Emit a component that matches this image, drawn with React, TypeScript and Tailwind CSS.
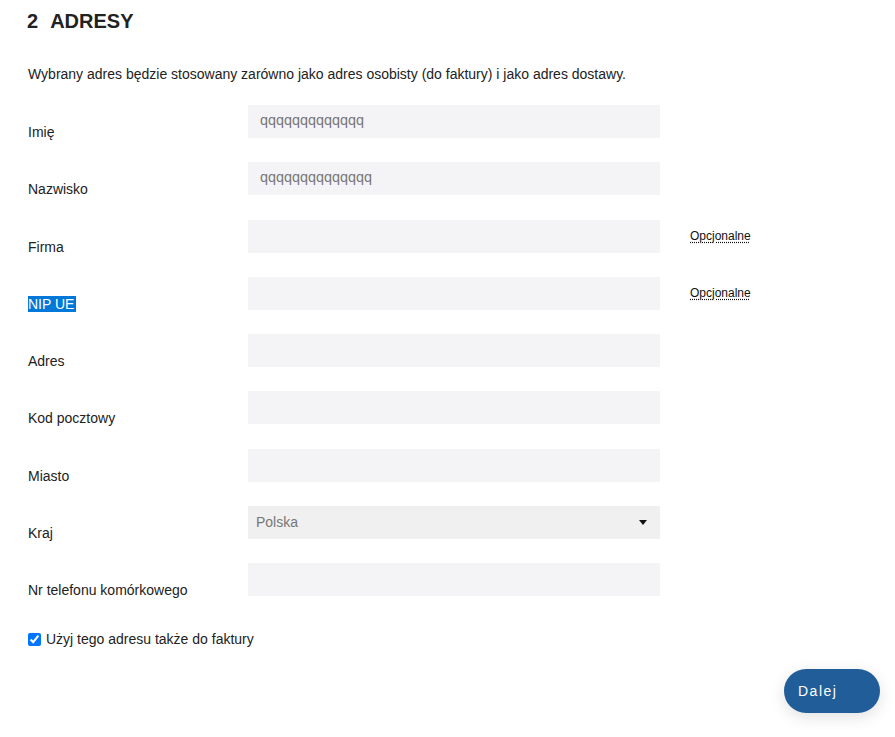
import React from "react";

const FIELDS = [
  { label: "Imię", value: "qqqqqqqqqqqqq" },
  { label: "Nazwisko", value: "qqqqqqqqqqqqqq" },
  { label: "Firma", value: "", optional: true },
  { label: "NIP UE", value: "", optional: true, selected: true },
  { label: "Adres", value: "" },
  { label: "Kod pocztowy", value: "" },
  { label: "Miasto", value: "" },
  { label: "Kraj", value: "Polska", select: true },
  { label: "Nr telefonu komórkowego", value: "" },
];

const Row = ({ field }: { field: (typeof FIELDS)[number] }) => (
  <div className="flex items-start h-[57.25px]">
    <div className="w-[220px] pt-[19px] text-[14px] leading-[16px] text-[#222]">
      {field.selected ? (
        <span className="bg-[#0078d7] text-white pr-[2px]">{field.label}</span>
      ) : (
        field.label
      )}
    </div>
    {field.select ? (
      <div className="w-[412px] h-[33px] bg-[#f0f0f0] flex items-center justify-between pl-2 pr-[13px] text-[14px] text-[#777]">
        <span>{field.value}</span>
        <svg width="8" height="5" viewBox="0 0 8 5">
          <path d="M0 0h8L4 5z" fill="#111" />
        </svg>
      </div>
    ) : (
      <div className="w-[412px] h-[33px] bg-[#f4f4f6] flex items-center pl-3 text-[14.4px] text-[#777] pb-[1px]">
        {field.value}
      </div>
    )}
    {field.optional && (
      <span className="ml-[30px] mt-[9px] text-[12px] leading-[14px] text-[#111] underline decoration-dotted underline-offset-2">
        Opcjonalne
      </span>
    )}
  </div>
);

export default function App() {
  return (
    <div className="min-h-screen bg-white font-['Liberation_Sans',Arial,sans-serif] text-[#222] relative">
      <div className="pl-[28px] pt-[9px]">
        <h1 className="text-[20px] leading-[24px] font-bold flex gap-[12px] -ml-[1px]">
          <span>2</span>
          <span>ADRESY</span>
        </h1>
        <p className="mt-[33px] text-[14px] leading-[16px]">
          Wybrany adres będzie stosowany zarówno jako adres osobisty (do faktury) i jako adres dostawy.
        </p>
        <div className="mt-[23px]">
          {FIELDS.map((f) => (
            <Row key={f.label} field={f} />
          ))}
        </div>
        <label className="flex items-center gap-[5px] mt-[11px] text-[14px] leading-[16px]">
          <input type="checkbox" defaultChecked className="w-[13px] h-[13px] m-0 accent-[#0075ff]" />
          <span>Użyj tego adresu także do faktury</span>
        </label>
      </div>
      <button className="absolute left-[784px] top-[669px] w-[96px] h-[44px] rounded-full bg-[#215e99] text-white text-[14px] tracking-[1.5px] text-left pl-[14px] shadow-[0_4px_16px_rgba(0,0,0,0.12)]">
        Dalej
      </button>
    </div>
  );
}
